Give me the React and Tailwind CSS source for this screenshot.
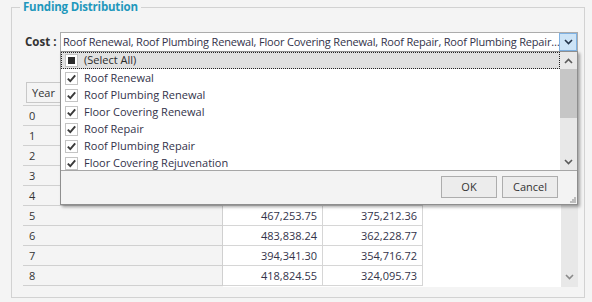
import React from "react";

const items = [
  "Roof Renewal",
  "Roof Plumbing Renewal",
  "Floor Covering Renewal",
  "Roof Repair",
  "Roof Plumbing Repair",
  "Floor Covering Rejuvenation",
];

const rows = [
  ["0", "", ""],
  ["1", "", ""],
  ["2", "", ""],
  ["3", "", ""],
  ["4", "", ""],
  ["5", "467,253.75", "375,212.36"],
  ["6", "483,838.24", "362,228.77"],
  ["7", "394,341.30", "354,716.72"],
  ["8", "418,824.55", "324,095.73"],
];

function CheckBox({ all }) {
  return (
    <svg width="13" height="13" viewBox="0 0 13 13" className="shrink-0">
      <rect x="0.5" y="0.5" width="12" height="12" fill="#ffffff" stroke="#c4c4c4" />
      {all ? (
        <rect x="3" y="3" width="7" height="7" fill="#2b2b2b" />
      ) : (
        <path d="M2.8 6.6 L5.3 9.2 L10.2 3.4" fill="none" stroke="#3a3a3a" strokeWidth="1.9" />
      )}
    </svg>
  );
}

function Chevron({ up, color = "#5a5a5a" }) {
  return (
    <svg width="9" height="6" viewBox="0 0 9 6">
      {up ? (
        <path d="M1 5 L4.5 1.5 L8 5" fill="none" stroke={color} strokeWidth="1.6" />
      ) : (
        <path d="M1 1 L4.5 4.5 L8 1" fill="none" stroke={color} strokeWidth="1.6" />
      )}
    </svg>
  );
}

export default function App() {
  return (
    <div className="relative w-[592px] h-[302px] overflow-hidden bg-[#f4f4f4] pt-[7px] pl-[11px] font-['Open_Sans',sans-serif] text-[11px] text-[#333]">
      <div className="relative w-[574px] h-[291px] border border-[#d2d2d2] flex flex-col">
        <div className="absolute -top-[9px] left-[8px] px-[3px] bg-[#f4f4f4] text-[11.5px] tracking-[-0.2px] font-bold text-[#1f98bc] leading-[16px]">
          Funding Distribution
        </div>

        <div className="flex items-center mt-[24px] pl-[13px]">
          <span className="w-[35px] font-bold text-[#333] text-[11.5px]">Cost :</span>
          <div className="relative">
            <div className="flex w-[518px] h-[20px] border border-[#acacac] bg-white">
              <div className="flex-1 pl-[2px] leading-[18px] whitespace-nowrap overflow-hidden tracking-[-0.18px] text-[#33334a]">
                Roof Renewal, Roof Plumbing Renewal, Floor Covering Renewal, Roof Repair, Roof Plumbing Repair…
              </div>
              <div className="w-[18px] h-[18px] bg-[#cde4f7] border border-[#7fb2e3] flex items-center justify-center">
                <Chevron color="#23344a" />
              </div>
            </div>

            <div className="absolute left-0 top-[19px] z-10 w-[518px] h-[154px] border border-[#8e8e8e] bg-white flex flex-col shadow-[2px_2px_3px_rgba(0,0,0,0.35)]">
              <div className="flex h-[119px] border-b border-[#a6a6a6]">
                <div className="flex-1 flex flex-col">
                  <div className="flex items-center h-[17px] bg-[#e0e0e0] border border-dotted border-[#222] pl-[3px] gap-[6px]">
                    <CheckBox all />
                    <span className="text-[#2a2a2a]">(Select All)</span>
                  </div>
                  {items.map((t) => (
                    <div key={t} className="flex items-center h-[17px] pt-[2px] pl-[4px] gap-[6px]">
                      <CheckBox />
                      <span className="text-[#33334a]">{t}</span>
                    </div>
                  ))}
                </div>
                <div className="w-[17px] bg-[#e8e8e8] flex flex-col">
                  <div className="h-[17px] flex items-center justify-center">
                    <Chevron up />
                  </div>
                  <div className="h-[49px] bg-[#c6c6c6]" />
                  <div className="flex-1" />
                  <div className="h-[17px] flex items-center justify-center">
                    <Chevron />
                  </div>
                </div>
              </div>
              <div className="relative flex-1 bg-[#f3f3f3] flex justify-end items-start pt-[5px] pr-[19px] gap-[5px]">
                <button className="w-[56px] h-[22px] border border-[#adadad] bg-[#ececec] text-[11px] text-[#333] leading-[20px]">
                  OK
                </button>
                <button className="w-[56px] h-[22px] border border-[#adadad] bg-[#ececec] text-[11px] text-[#333] leading-[20px]">
                  Cancel
                </button>
                <svg width="7" height="7" viewBox="0 0 7 7" className="absolute right-[1px] bottom-[1px]">
                  <rect x="5" y="1" width="2" height="2" fill="#bdbdbd" />
                  <rect x="3" y="3" width="2" height="2" fill="#bdbdbd" />
                  <rect x="5" y="3" width="2" height="2" fill="#bdbdbd" />
                  <rect x="1" y="5" width="2" height="2" fill="#bdbdbd" />
                  <rect x="3" y="5" width="2" height="2" fill="#bdbdbd" />
                  <rect x="5" y="5" width="2" height="2" fill="#bdbdbd" />
                </svg>
              </div>
            </div>
          </div>
        </div>

        <div className="ml-[11px] mt-[29px] w-[555px] h-[206px] flex">
          <div className="flex flex-col w-[538px]">
            <div className="flex h-[25px] border-b border-[#d0d0d0]">
              <div className="w-[200px] pl-[3px] pt-[1px]">
                <div className="w-[120px] h-[21px] border border-[#c8c8c8] bg-[#f4f4f4] pl-[5px] leading-[19px] text-[#333]">
                  Year
                </div>
              </div>
              <div className="w-[100px] bg-white" />
              <div className="w-[100px] bg-white" />
              <div className="flex-1 bg-white" />
            </div>
            {rows.map((r) => (
              <div key={r[0]} className="flex h-[20px]">
                <div className="w-[200px] border-b border-r border-[#d0d0d0] pl-[6px] leading-[19px] text-[#333]">
                  {r[0]}
                </div>
                <div className="w-[100px] bg-white border-b border-r border-[#d6d6d6] pr-[5px] text-right leading-[19px] text-[#33334a]">
                  {r[1]}
                </div>
                <div className="w-[100px] bg-white border-b border-r border-[#d6d6d6] pr-[5px] text-right leading-[19px] text-[#33334a]">
                  {r[2]}
                </div>
                <div className="flex-1 bg-white" />
              </div>
            ))}
            <div className="flex h-[1px]">
              <div className="w-[200px]" />
              <div className="flex-1 bg-white" />
            </div>
          </div>
          <div className="w-[17px] bg-[#e8e8e8] flex flex-col justify-end">
            <div className="h-[17px] flex items-center justify-center mb-[2px]">
              <Chevron color="#8a8a8a" />
            </div>
          </div>
        </div>
      </div>
    </div>
  );
}
